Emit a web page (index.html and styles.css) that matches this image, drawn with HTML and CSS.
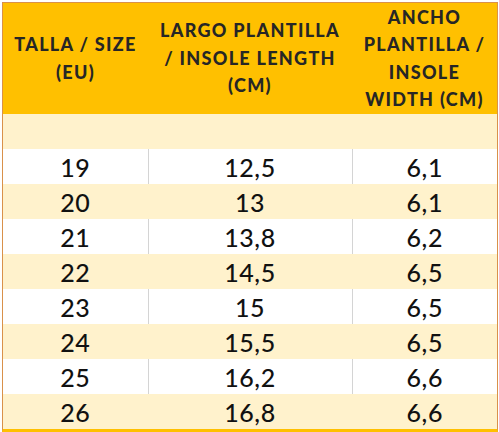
FILE: index.html
```html
<!DOCTYPE html>
<html>
<head>
<meta charset="utf-8">
<link rel="stylesheet" href="styles.css">
</head>
<body>
<div class="frame">
<table class="sizes">
  <colgroup><col class="c1"><col class="c2"><col class="c3"></colgroup>
  <thead>
    <tr class="head">
      <th>TALLA / SIZE<br>(EU)</th>
      <th>LARGO PLANTILLA<br>/ INSOLE LENGTH<br>(CM)</th>
      <th>ANCHO<br>PLANTILLA /<br>INSOLE<br>WIDTH (CM)</th>
    </tr>
  </thead>
  <tbody>
    <tr class="alt"><td></td><td></td><td></td></tr>
    <tr><td>19</td><td>12,5</td><td>6,1</td></tr>
    <tr class="alt"><td>20</td><td>13</td><td>6,1</td></tr>
    <tr><td>21</td><td>13,8</td><td>6,2</td></tr>
    <tr class="alt"><td>22</td><td>14,5</td><td>6,5</td></tr>
    <tr><td>23</td><td>15</td><td>6,5</td></tr>
    <tr class="alt"><td>24</td><td>15,5</td><td>6,5</td></tr>
    <tr><td>25</td><td>16,2</td><td>6,6</td></tr>
    <tr class="alt"><td>26</td><td>16,8</td><td>6,6</td></tr>
  </tbody>
</table>
</div>
</body>
</html>
```

FILE: styles.css
```css
html, body {
  margin: 0;
  padding: 0;
  background: #ffffff;
}
.frame {
  margin: 2px 0 0 2px;
  width: 494px;
  border-left: 1px solid #d9914a;
  border-top: 1px solid #d9914a;
  border-right: 1px solid #d9914a;
  border-bottom: 3px solid #ffc000;
}
.sizes {
  width: 100%;
  border-collapse: collapse;
  table-layout: fixed;
  font-family: "Lato", "Liberation Sans", sans-serif;
}
.c1 { width: 145px; }
.c2 { width: 204px; }
.c3 { width: 145px; }
.head th {
  background: #ffc000;
  height: 111px;
  padding: 0;
  font-size: 18px;
  font-weight: 900;
  letter-spacing: 1.3px;
  line-height: 27.5px;
  color: #262626;
  text-align: center;
  vertical-align: middle;
  white-space: nowrap;
}
.sizes td {
  height: 35px;
  padding: 0;
  text-align: center;
  vertical-align: middle;
  font-size: 25px;
  font-weight: 500;
  letter-spacing: 0.6px;
  color: #111111;
  background: #ffffff;
  border-left: 1px solid #d4d4d4;
}
.sizes td:first-child { border-left: none; }
.sizes tr.alt td {
  background: #fff2cc;
  border-left-color: #fff2cc;
}
```
